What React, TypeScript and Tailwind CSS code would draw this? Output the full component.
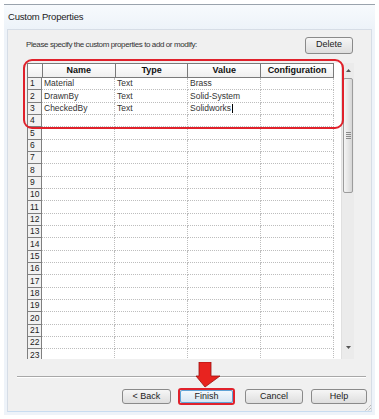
import React from "react";

const data: Record<number, [string, string, string]> = {
  1: ["Material", "Text", "Brass"],
  2: ["DrawnBy", "Text", "Solid-System"],
  3: ["CheckedBy", "Text", "Solidworks"],
};

const rows = Array.from({ length: 23 }, (_, i) => i + 1);

function Btn({ label, w, cls = "" }: { label: string; w: string; cls?: string }) {
  return (
    <div
      className={`${w} h-[15px] flex items-center justify-center rounded-[3px] border border-[#8a8a8a] bg-gradient-to-b from-[#f6f6f6] to-[#dedede] text-[9px] text-[#222] ${cls}`}
    >
      {label}
    </div>
  );
}

export default function App() {
  return (
    <div
      className="w-[379px] h-[419px] bg-white relative overflow-hidden flex flex-col pt-[4px] px-[4px] pb-[4px]"
      style={{ fontFamily: "'Liberation Sans', Arial, sans-serif" }}
    >
      <div className="flex-1 flex flex-col border-t border-[#9aa3ad] bg-[#c9dcf0]">
        {/* Title bar */}
        <div className="h-[24px] flex items-center pl-[4px] bg-gradient-to-b from-[#f7fafd] to-[#edf3f9] text-[9.5px] tracking-[-0.2px] text-[#1b1b1b]">
          Custom Properties
        </div>
        {/* Panel */}
        <div className="flex-1 flex px-[3px] pb-[3px] bg-[#eef3f9]">
          <div className="flex-1 flex flex-col bg-[#f0f0f0] border border-[#d6dde6] border-b-[#c9dcf0] pt-[6px]">
            <div className="flex items-center justify-between pl-[18px] pr-[18px] h-[18px]">
              <span className="text-[8px] text-[#333] tracking-[-0.4px]">
                Please specify the custom properties to add or modify:
              </span>
              <Btn label="Delete" w="w-[48px]" cls="h-[17px]" />
            </div>

            {/* Grid */}
            <div className="mt-[9px] ml-[19px] w-[327px] h-[296px] overflow-hidden bg-white flex">
              <div className="w-[307px] flex flex-col">
                {/* header */}
                <div className="h-[15px] flex shrink-0 border-t border-l border-[#7a7a7a] bg-gradient-to-b from-[#ffffff] to-[#eeeeee] text-[9px] font-bold text-[#111]">
                  <div className="w-[15px] border-r border-b border-[#7a7a7a]" />
                  <div className="w-[73px] border-r border-b border-[#7a7a7a] flex items-center justify-center">Name</div>
                  <div className="w-[73px] border-r border-b border-[#7a7a7a] flex items-center justify-center">Type</div>
                  <div className="w-[73px] border-r border-b border-[#7a7a7a] flex items-center justify-center">Value</div>
                  <div className="w-[73px] border-r border-b border-[#7a7a7a] flex items-center justify-center">Configuration</div>
                </div>
                {rows.map((r) => {
                  const d = data[r];
                  return (
                    <div key={r} className="h-[12.33px] shrink-0 flex text-[8.5px] text-[#333]">
                      <div className="w-[15px] border-l border-r border-b border-[#7f7f7f] bg-[#f2f2f2] flex items-center pl-[2px] text-[8.5px] text-[#222]">
                        {r}
                      </div>
                      <div className="w-[73px] border-r border-b border-dotted border-[#bdbdbd] flex items-center pl-[2px]">
                        {d ? d[0] : ""}
                      </div>
                      <div className="w-[73px] border-r border-b border-dotted border-[#bdbdbd] flex items-center pl-[2px]">
                        {d ? d[1] : ""}
                      </div>
                      <div className="w-[73px] border-r border-b border-dotted border-[#bdbdbd] flex items-center pl-[2px]">
                        {d ? d[2] : ""}
                        {r === 3 && <span className="inline-block w-[1px] h-[9px] bg-black ml-[1px]" />}
                      </div>
                      <div className="w-[73px] border-r border-b border-dotted border-[#bdbdbd]" />
                    </div>
                  );
                })}
              </div>
              <div className="w-[7px]" />
              {/* Scrollbar */}
              <div className="w-[13px] h-full flex flex-col bg-[#ebebeb] border-l border-[#e0e0e0]">
                <div className="h-[15px] flex items-center justify-center">
                  <svg width="5" height="3" viewBox="0 0 5 3">
                    <path d="M0 3 L2.5 0 L5 3 Z" fill="#555" />
                  </svg>
                </div>
                <div className="mx-[1px] h-[115px] rounded-[2px] border border-[#9c9c9c] bg-gradient-to-r from-[#f4f4f4] via-[#e6e6e6] to-[#d6d6d6] flex items-center justify-center">
                  <div className="flex flex-col gap-[1px]">
                    <div className="w-[5px] h-[1px] bg-[#8a8a8a]" />
                    <div className="w-[5px] h-[1px] bg-[#8a8a8a]" />
                    <div className="w-[5px] h-[1px] bg-[#8a8a8a]" />
                    <div className="w-[5px] h-[1px] bg-[#8a8a8a]" />
                  </div>
                </div>
                <div className="flex-1" />
                <div className="h-[18px] flex items-start justify-center pt-[5px]">
                  <svg width="5" height="3" viewBox="0 0 5 3">
                    <path d="M0 0 L2.5 3 L5 0 Z" fill="#555" />
                  </svg>
                </div>
              </div>
            </div>

            {/* Separator */}
            <div className="mt-[17px] ml-[9px] mr-[5px] h-[2px] border-t border-[#a8a8a8] border-b border-b-white" />

            {/* Buttons */}
            <div className="mt-[10px] flex justify-end items-center pr-[4px]">
              <Btn label="< Back" w="w-[49px]" />
              <div className="ml-[7px] w-[57px] h-[17px] border-2 border-[#e0212b] rounded-[3px] flex items-center justify-center">
                <div className="w-[53px] h-[13px] flex items-center justify-center rounded-[2px] border border-[#5fa3d6] bg-gradient-to-b from-[#f2f8fd] to-[#d8e6f2] text-[9px] text-[#222]">
                  Finish
                </div>
              </div>
              <Btn label="Cancel" w="w-[58px]" cls="ml-[10px]" />
              <Btn label="Help" w="w-[56px]" cls="ml-[8px]" />
            </div>
          </div>
        </div>
      </div>

      {/* Red highlight around first rows */}
      <div className="absolute left-[23px] top-[59px] w-[321px] h-[70px] border-2 border-[#e0212b] rounded-[9px]" />

      {/* Red arrow */}
      <svg className="absolute left-[193px] top-[362px]" width="30" height="26" viewBox="0 0 30 26">
        <path d="M6 0 H18 V14 H27 L12 25 L3 14 H6 Z" fill="#e8231f" stroke="#9a1010" strokeWidth="0.8" />
      </svg>

      {/* Resize grip */}
      <svg className="absolute left-[363px] top-[403px]" width="9" height="9" viewBox="0 0 9 9">
        <path d="M8 2 L2 8 M8 5 L5 8" stroke="#a0a0a0" strokeWidth="1" strokeDasharray="1 1" />
      </svg>
    </div>
  );
}
